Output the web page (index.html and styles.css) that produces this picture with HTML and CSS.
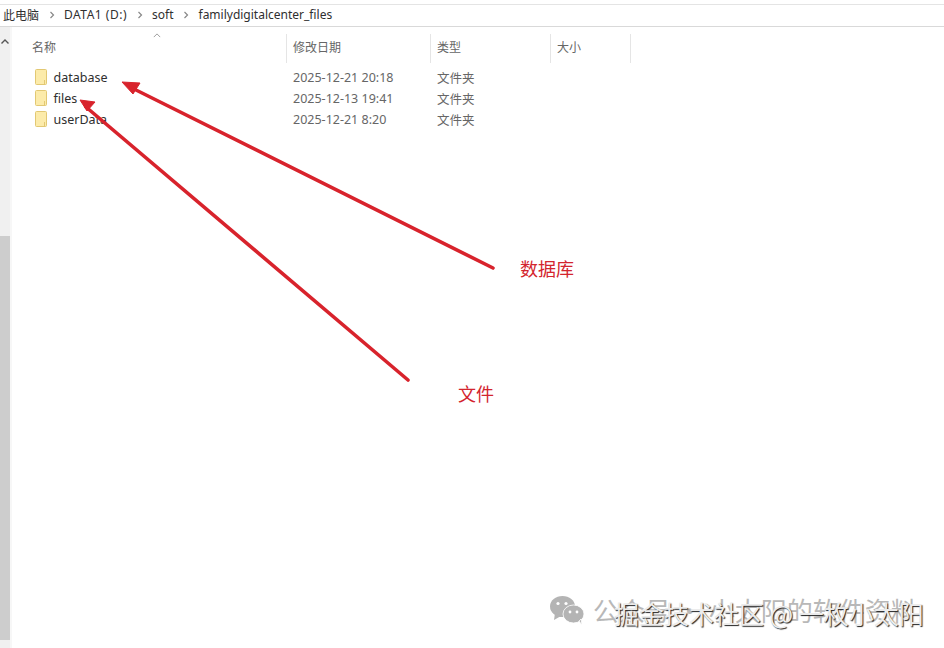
FILE: index.html
```html
<!DOCTYPE html>
<html lang="zh">
<head>
    <meta charset="UTF-8">
    <meta name="viewport" content="width=device-width, initial-scale=1.0">
    <title>familydigitalcenter_files</title>
    <link rel="stylesheet" href="styles.css">
</head>
<body>
    <div class="explorer">
        <div class="breadcrumb">
            <span>此电脑</span>
            <svg class="crumb-sep" viewBox="0 0 6 8"><path d="M1.5 1l3 3-3 3" /></svg>
            <span class="crumb-drive">DATA1 (D:)</span>
            <svg class="crumb-sep" viewBox="0 0 6 8"><path d="M1.5 1l3 3-3 3" /></svg>
            <span>soft</span>
            <svg class="crumb-sep" viewBox="0 0 6 8"><path d="M1.5 1l3 3-3 3" /></svg>
            <span>familydigitalcenter_files</span>
        </div>
        <div class="main">
            <div class="scrollbar">
                <svg class="scroll-up" viewBox="0 0 10 8"><path d="M1.5 5.5L5 2l3.5 3.5" /></svg>
                <div class="scroll-thumb"></div>
            </div>
            <div class="list">
                <svg class="sort-mark" viewBox="0 0 10 6"><path d="M1 5l4-4 4 4" /></svg>
                <div class="list-head">
                    <div class="col col-name">名称</div>
                    <div class="col col-date">修改日期</div>
                    <div class="col col-type">类型</div>
                    <div class="col col-size">大小</div>
                </div>
                <div class="row">
                    <div class="cell-name">
                        <svg class="folder" viewBox="0 0 14 16"><rect x="1.5" y="0.5" width="11" height="15" rx="1" /><path class="folder-tab" d="M10.5 11v4.5" /></svg>
                        <span>database</span>
                    </div>
                    <div class="cell-date">2025-12-21 20:18</div>
                    <div class="cell-type">文件夹</div>
                </div>
                <div class="row">
                    <div class="cell-name">
                        <svg class="folder" viewBox="0 0 14 16"><rect x="1.5" y="0.5" width="11" height="15" rx="1" /><path class="folder-tab" d="M10.5 11v4.5" /></svg>
                        <span>files</span>
                    </div>
                    <div class="cell-date">2025-12-13 19:41</div>
                    <div class="cell-type">文件夹</div>
                </div>
                <div class="row">
                    <div class="cell-name">
                        <svg class="folder" viewBox="0 0 14 16"><rect x="1.5" y="0.5" width="11" height="15" rx="1" /><path class="folder-tab" d="M10.5 11v4.5" /></svg>
                        <span>userData</span>
                    </div>
                    <div class="cell-date">2025-12-21 8:20</div>
                    <div class="cell-type">文件夹</div>
                </div>
            </div>
        </div>

        <!-- annotations drawn over the window -->
        <svg class="arrows" viewBox="0 0 944 648">
            <path class="arrow-line" d="M493 268L132 88" />
            <path class="arrow-head" d="M122 82L140 83L133 94Z" />
            <path class="arrow-line" d="M408 380L86 107" />
            <path class="arrow-head" d="M80 100L95 102L87 111Z" />
        </svg>
        <div class="note note-db">数据库</div>
        <div class="note note-file">文件</div>

        <svg class="wechat" viewBox="0 0 36 30">
            <ellipse cx="13.5" cy="11.5" rx="12.5" ry="10.5" />
            <path d="M6 18l-1 7 7-4z" />
            <ellipse class="wechat-front" cx="24.5" cy="19" rx="10.5" ry="9" />
            <path class="wechat-front" d="M30 26l3 4-1-6z" />
            <circle class="wechat-eye" cx="9" cy="8.5" r="1.6" />
            <circle class="wechat-eye" cx="17" cy="8.5" r="1.6" />
            <circle class="wechat-eye" cx="21" cy="17" r="1.4" />
            <circle class="wechat-eye" cx="28" cy="17" r="1.4" />
        </svg>
        <div class="mark mark-back">公众号 · 小太阳的软件资料</div>
        <div class="mark mark-front">掘金技术社区 @ 一枚小太阳</div>
    </div>
</body>
</html>
```

FILE: styles.css
```css
body {
    margin: 0;
    background: #fff;
    font-family: 'Noto Sans', 'Noto Sans CJK SC', sans-serif;
    font-size: 12px;
    color: #333;
}
.explorer {
    position: relative;
    width: 944px;
    height: 648px;
    overflow: hidden;
}
.breadcrumb {
    box-sizing: border-box;
    height: 23px;
    margin-top: 4px;
    padding-left: 3px;
    padding-bottom: 2px;
    display: flex;
    align-items: center;
    gap: 9.5px;
    border-top: 1px solid #e4e4e4;
    border-bottom: 1px solid #d9d9d9;
    color: #2f2f2f;
    font-size: 12px;
}
.crumb-drive {
    letter-spacing: 0.5px;
}
.crumb-sep {
    width: 6px;
    height: 8px;
    fill: none;
    stroke: #888;
    stroke-width: 1.2;
}
.main {
    display: flex;
    height: 621px;
}
.scrollbar {
    position: relative;
    width: 10px;
    flex: none;
    background: #f0f0f0;
    border-right: 2px solid #f7f7f7;
}
.scroll-up {
    position: absolute;
    left: 0;
    top: 11px;
    width: 10px;
    height: 8px;
    fill: none;
    stroke: #555;
    stroke-width: 1.4;
}
.scroll-thumb {
    position: absolute;
    left: 0;
    top: 209px;
    bottom: 8px;
    width: 10px;
    background: #cdcdcd;
}
.list {
    position: relative;
    flex: 1;
}
.sort-mark {
    position: absolute;
    left: 141px;
    top: 6px;
    width: 8px;
    height: 5px;
    fill: none;
    stroke: #888;
    stroke-width: 1;
}
.list-head {
    display: flex;
    height: 29px;
    margin-top: 7px;
    margin-bottom: 4px;
    color: #666;
    font-size: 12px;
}
.col {
    box-sizing: border-box;
    padding-left: 6px;
    line-height: 28px;
    border-right: 1px solid #e5e5e5;
}
.col-name {
    width: 275px;
    padding-left: 20px;
}
.col-date {
    width: 144px;
}
.col-type {
    width: 120px;
}
.col-size {
    width: 80px;
}
.row {
    display: flex;
    height: 21px;
    align-items: center;
    color: #666;
    font-size: 12.5px;
}
.cell-name {
    width: 275px;
    box-sizing: border-box;
    padding-left: 22px;
    display: flex;
    align-items: center;
    gap: 5.5px;
    color: #2f2f2f;
}
.cell-date {
    width: 144px;
    padding-left: 6px;
    box-sizing: border-box;
}
.cell-type {
    padding-left: 6px;
}
.folder {
    width: 14px;
    height: 16px;
    margin-top: -2px;
    flex: none;
}
.folder rect {
    fill: #fcebaa;
    stroke: #e2c873;
}
.folder-tab {
    fill: none;
    stroke: #e2c873;
}
.arrows {
    position: absolute;
    left: 0;
    top: 0;
    width: 944px;
    height: 648px;
}
.arrow-line {
    fill: none;
    stroke: #d8232c;
    stroke-width: 3.6;
    stroke-linecap: round;
}
.arrow-head {
    fill: #d8232c;
    stroke: #d8232c;
    stroke-linejoin: round;
}
.note {
    position: absolute;
    color: #d3252e;
    font-size: 18px;
    line-height: 24px;
    font-family: 'Noto Sans CJK SC', sans-serif;
}
.note-db {
    left: 520px;
    top: 256px;
}
.note-file {
    left: 458px;
    top: 381px;
}
.wechat {
    position: absolute;
    left: 549px;
    top: 595px;
    width: 36px;
    height: 30px;
    fill: #b4b4b4;
}
.wechat-front {
    stroke: #fff;
    stroke-width: 0.8;
}
.wechat-eye {
    fill: #fff;
}
.mark {
    position: absolute;
    white-space: nowrap;
    font-family: 'Noto Sans CJK SC', sans-serif;
}
.mark-back {
    left: 593px;
    top: 594px;
    color: #b8b8b8;
    font-size: 26px;
    line-height: 32px;
}
.mark-front {
    left: 614px;
    top: 598px;
    color: #ececec;
    font-size: 25px;
    line-height: 30px;
    text-shadow: 1px 1px 1px #222;
}
```
